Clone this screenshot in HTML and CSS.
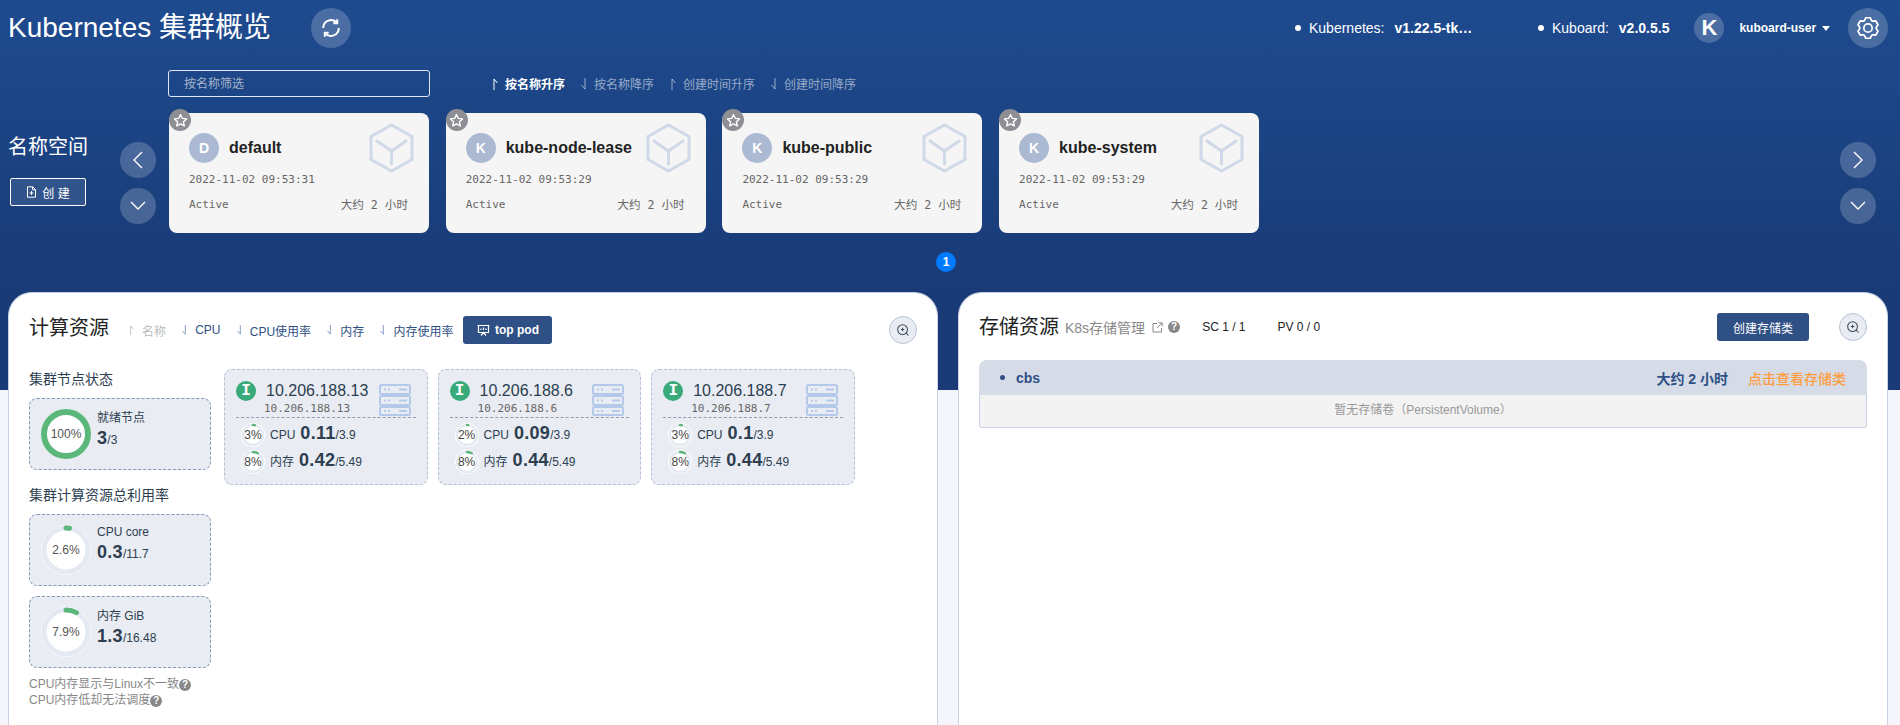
FILE: index.html
```html
<!DOCTYPE html>
<html lang="zh-CN">
<head>
<meta charset="utf-8">
<title>Kubernetes 集群概览</title>
<link rel="stylesheet" href="styles.css">
</head>
<body>
<svg class="defs" width="0" height="0" aria-hidden="true">
  <symbol id="up" viewBox="0 0 6 12"><path d="M2 12V1L5.5 5" fill="none" stroke="currentColor" stroke-width="1"/></symbol>
  <symbol id="down" viewBox="0 0 6 12"><path d="M4 0V11L.5 7" fill="none" stroke="currentColor" stroke-width="1"/></symbol>
  <symbol id="star" viewBox="0 0 24 24"><path d="M12 2.5l2.9 6.2 6.8.8-5 4.6 1.4 6.7-6.1-3.4-6 3.4 1.3-6.7-5-4.6 6.8-.8z" fill="none" stroke="currentColor" stroke-width="2.2" stroke-linejoin="round"/></symbol>
  <symbol id="cube" viewBox="0 0 45 50"><path d="M22.5 2L43 13.500v23L22.500 48 2 36.500v-23z M8 18l14.500 10L37 18 M22.500 28v13" fill="none" stroke="currentColor" stroke-width="3" stroke-linejoin="round" stroke-linecap="round"/></symbol>
  <symbol id="server" viewBox="0 0 32 32"><g fill="none" stroke="currentColor" stroke-width="2"><rect x="1" y="1" width="30" height="9" rx="1.500"/><rect x="1" y="12" width="30" height="9" rx="1.500"/><rect x="1" y="23" width="30" height="8" rx="1.500"/></g><path d="M5 5.500h2M9 5.500h2M20 5.500h8M5 16.500h2M9 16.500h2M20 16.500h8M5 27h2M9 27h2M20 27h8" stroke="currentColor" stroke-width="2"/></symbol>
  <symbol id="magnify" viewBox="0 0 16 16"><g fill="none" stroke="currentColor" stroke-width="1.200"><circle cx="7.500" cy="7.500" r="5.600"/><path d="M11.600 11.600L14 14" stroke-linecap="round"/><path d="M5.500 7.500h4M7.500 5.500v4"/></g></symbol>
</svg>

<div class="page">
  <header class="topbar">
    <h1 class="title">Kubernetes 集群概览</h1>
    <button class="round refresh" type="button" aria-label="刷新">
      <svg width="22" height="22" viewBox="0 0 24 24" fill="none" stroke="#fff" stroke-width="2.200"><path d="M20.500 12a8.500 8.500 0 0 1-15 5.500M3.500 12a8.500 8.500 0 0 1 15-5.500"/><path d="M18.800 2.500v4.300h-4.300M5.200 21.500v-4.300h4.300"/></svg>
    </button>
    <div class="meta meta-k8s"><i class="dot"></i><span>Kubernetes:</span><b class="ellipsis">v1.22.5-tk…</b></div>
    <div class="meta meta-kb"><i class="dot"></i><span>Kuboard:</span><b>v2.0.5.5</b></div>
    <span class="user-avatar">K</span>
    <span class="user-name">kuboard-user</span>
    <i class="caret"></i>
    <button class="round gear" type="button" aria-label="设置">
      <svg width="24" height="24" viewBox="0 0 24 24" fill="none" stroke="#fff" stroke-width="1.700" stroke-linejoin="round"><path d="M8.410 4.630L9.820 1.730H14.180L15.590 4.630L16.580 5.200L19.800 4.970L21.990 8.760L20.180 11.430V12.570L21.990 15.240L19.800 19.030L16.580 18.800L15.590 19.370L14.180 22.270H9.820L8.410 19.370L7.420 18.800L4.200 19.030L2.010 15.240L3.820 12.570V11.430L2.010 8.760L4.200 4.970L7.420 5.200Z"/><circle cx="12" cy="12" r="4.200"/></svg>
    </button>
  </header>

  <section class="hero">
    <div class="side">
      <div class="side-title">名称空间</div>
      <button class="create" type="button">
        <svg width="11" height="12" viewBox="0 0 11 12" fill="none" stroke="#fff" stroke-width="1"><path d="M1.500.8h5.200l2.800 2.800v7.600h-8zM6.500 1v2.800h3M5.500 5v4M3.500 7h4"/></svg>
        <span>创 建</span>
      </button>
    </div>
    <div class="nav">
      <button class="round-s" type="button" aria-label="上一页"><svg width="14" height="20" viewBox="0 0 14 20" fill="none" stroke="#fff" stroke-width="1.400"><path d="M11 2L3 10l8 8"/></svg></button>
      <button class="round-s" type="button" aria-label="展开"><svg width="18" height="12" viewBox="0 0 18 12" fill="none" stroke="#fff" stroke-width="1.400"><path d="M2 2l7 7 7-7"/></svg></button>
    </div>
    <div class="hero-main">
      <div class="filters">
        <input class="filter" type="text" placeholder="按名称筛选">
        <div class="sorts sorts-hero">
          <span class="sort active"><svg class="arr"><use href="#up"/></svg>按名称升序</span>
          <span class="sort"><svg class="arr"><use href="#down"/></svg>按名称降序</span>
          <span class="sort"><svg class="arr"><use href="#up"/></svg>创建时间升序</span>
          <span class="sort"><svg class="arr"><use href="#down"/></svg>创建时间降序</span>
        </div>
      </div>
      <div class="cards">
        <article class="ns">
          <span class="fav"><svg width="15" height="15"><use href="#star"/></svg></span>
          <div class="ns-head"><span class="ns-avatar">D</span><span class="ns-name">default</span><svg class="cube"><use href="#cube"/></svg></div>
          <div class="ns-time">2022-11-02 09:53:31</div>
          <div class="ns-foot"><span>Active</span><span>大约 2 小时</span></div>
        </article>
        <article class="ns">
          <span class="fav"><svg width="15" height="15"><use href="#star"/></svg></span>
          <div class="ns-head"><span class="ns-avatar">K</span><span class="ns-name">kube-node-lease</span><svg class="cube"><use href="#cube"/></svg></div>
          <div class="ns-time">2022-11-02 09:53:29</div>
          <div class="ns-foot"><span>Active</span><span>大约 2 小时</span></div>
        </article>
        <article class="ns">
          <span class="fav"><svg width="15" height="15"><use href="#star"/></svg></span>
          <div class="ns-head"><span class="ns-avatar">K</span><span class="ns-name">kube-public</span><svg class="cube"><use href="#cube"/></svg></div>
          <div class="ns-time">2022-11-02 09:53:29</div>
          <div class="ns-foot"><span>Active</span><span>大约 2 小时</span></div>
        </article>
        <article class="ns">
          <span class="fav"><svg width="15" height="15"><use href="#star"/></svg></span>
          <div class="ns-head"><span class="ns-avatar">K</span><span class="ns-name">kube-system</span><svg class="cube"><use href="#cube"/></svg></div>
          <div class="ns-time">2022-11-02 09:53:29</div>
          <div class="ns-foot"><span>Active</span><span>大约 2 小时</span></div>
        </article>
      </div>
    </div>
    <div class="nav">
      <button class="round-s" type="button" aria-label="下一页"><svg width="14" height="20" viewBox="0 0 14 20" fill="none" stroke="#fff" stroke-width="1.400"><path d="M3 2l8 8-8 8"/></svg></button>
      <button class="round-s" type="button" aria-label="展开"><svg width="18" height="12" viewBox="0 0 18 12" fill="none" stroke="#fff" stroke-width="1.400"><path d="M2 2l7 7 7-7"/></svg></button>
    </div>
  </section>

  <div class="pager"><span class="page-dot">1</span></div>

  <main class="panels">
    <section class="panel panel-compute">
      <div class="panel-head">
        <h2 class="panel-title">计算资源</h2>
        <div class="sorts sorts-panel">
          <span class="sort off"><svg class="arr"><use href="#up"/></svg>名称</span>
          <span class="sort"><svg class="arr"><use href="#down"/></svg>CPU</span>
          <span class="sort"><svg class="arr"><use href="#down"/></svg>CPU使用率</span>
          <span class="sort"><svg class="arr"><use href="#down"/></svg>内存</span>
          <span class="sort"><svg class="arr"><use href="#down"/></svg>内存使用率</span>
        </div>
        <button class="btn btn-top" type="button">
          <svg width="13" height="13" viewBox="0 0 13 13" fill="none" stroke="#fff" stroke-width="1.200"><path d="M.5 1.500h12M1.500 1.500v7h10v-7M4 11.500l2.500-3 2.500 3M4 6V4.500M6.500 6V3.500M9 6V4.500"/></svg>
          top pod
        </button>
        <button class="zoom-btn" type="button" aria-label="放大"><svg width="14" height="14"><use href="#magnify"/></svg></button>
      </div>
      <div class="compute">
        <aside class="summary">
          <h3 class="sum-title">集群节点状态</h3>
          <div class="sum-box">
            <div class="ring-big">
              <svg width="50" height="50" viewBox="0 0 50 50"><circle cx="25" cy="25" r="25" fill="#fff"/><circle cx="25" cy="25" r="22" fill="#fff" stroke="#5cb87a" stroke-width="6"/></svg>
              <span>100%</span>
            </div>
            <div class="sum-text"><div class="sum-label">就绪节点</div><div class="sum-val"><b>3</b>/3</div></div>
          </div>
          <h3 class="sum-title sum-title-2">集群计算资源总利用率</h3>
          <div class="sum-box">
            <div class="ring-big">
              <svg width="50" height="50" viewBox="0 0 50 50"><circle cx="25" cy="25" r="25" fill="#fff"/><circle cx="25" cy="25" r="22" fill="none" stroke="#e5e9f2" stroke-width="5"/><circle cx="25" cy="25" r="22" fill="none" stroke="#5cb87a" stroke-width="5" stroke-linecap="round" pathLength="100" stroke-dasharray="2.600 100" transform="rotate(-90 25 25)"/></svg>
              <span>2.6%</span>
            </div>
            <div class="sum-text sum-text-cpu"><div class="sum-label">CPU core</div><div class="sum-val"><b>0.3</b>/11.7</div></div>
          </div>
          <div class="sum-box sum-box-last">
            <div class="ring-big">
              <svg width="50" height="50" viewBox="0 0 50 50"><circle cx="25" cy="25" r="25" fill="#fff"/><circle cx="25" cy="25" r="22" fill="none" stroke="#e5e9f2" stroke-width="5"/><circle cx="25" cy="25" r="22" fill="none" stroke="#5cb87a" stroke-width="5" stroke-linecap="round" pathLength="100" stroke-dasharray="7.900 100" transform="rotate(-90 25 25)"/></svg>
              <span>7.9%</span>
            </div>
            <div class="sum-text"><div class="sum-label">内存 GiB</div><div class="sum-val"><b>1.3</b>/16.48</div></div>
          </div>
          <p class="note">CPU内存显示与Linux不一致<i class="help">?</i></p>
          <p class="note">CPU内存低却无法调度<i class="help">?</i></p>
        </aside>
        <div class="nodes">
          <article class="node">
            <div class="node-head">
              <span class="node-badge">I</span>
              <div class="node-names"><div class="node-name">10.206.188.13</div><div class="node-ip">10.206.188.13</div></div>
              <svg class="server"><use href="#server"/></svg>
            </div>
            <div class="stat">
              <div class="ring-s"><svg width="24" height="24" viewBox="0 0 24 24"><circle cx="12" cy="12" r="12" fill="#fff"/><circle cx="12" cy="12" r="10" fill="#fff" stroke="#e5e9f2" stroke-width="2.400"/><circle cx="12" cy="12" r="10" fill="none" stroke="#5cb87a" stroke-width="2.400" pathLength="100" stroke-dasharray="3 100" stroke-linecap="round" transform="rotate(-90 12 12)"/></svg><span>3%</span></div>
              <span class="stat-label">CPU</span><b class="stat-val">0.11</b><span class="stat-max">/3.9</span>
            </div>
            <div class="stat">
              <div class="ring-s"><svg width="24" height="24" viewBox="0 0 24 24"><circle cx="12" cy="12" r="12" fill="#fff"/><circle cx="12" cy="12" r="10" fill="#fff" stroke="#e5e9f2" stroke-width="2.400"/><circle cx="12" cy="12" r="10" fill="none" stroke="#5cb87a" stroke-width="2.400" pathLength="100" stroke-dasharray="8 100" stroke-linecap="round" transform="rotate(-90 12 12)"/></svg><span>8%</span></div>
              <span class="stat-label">内存</span><b class="stat-val">0.42</b><span class="stat-max">/5.49</span>
            </div>
          </article>
          <article class="node">
            <div class="node-head">
              <span class="node-badge">I</span>
              <div class="node-names"><div class="node-name">10.206.188.6</div><div class="node-ip">10.206.188.6</div></div>
              <svg class="server"><use href="#server"/></svg>
            </div>
            <div class="stat">
              <div class="ring-s"><svg width="24" height="24" viewBox="0 0 24 24"><circle cx="12" cy="12" r="12" fill="#fff"/><circle cx="12" cy="12" r="10" fill="#fff" stroke="#e5e9f2" stroke-width="2.400"/><circle cx="12" cy="12" r="10" fill="none" stroke="#5cb87a" stroke-width="2.400" pathLength="100" stroke-dasharray="2 100" stroke-linecap="round" transform="rotate(-90 12 12)"/></svg><span>2%</span></div>
              <span class="stat-label">CPU</span><b class="stat-val">0.09</b><span class="stat-max">/3.9</span>
            </div>
            <div class="stat">
              <div class="ring-s"><svg width="24" height="24" viewBox="0 0 24 24"><circle cx="12" cy="12" r="12" fill="#fff"/><circle cx="12" cy="12" r="10" fill="#fff" stroke="#e5e9f2" stroke-width="2.400"/><circle cx="12" cy="12" r="10" fill="none" stroke="#5cb87a" stroke-width="2.400" pathLength="100" stroke-dasharray="8 100" stroke-linecap="round" transform="rotate(-90 12 12)"/></svg><span>8%</span></div>
              <span class="stat-label">内存</span><b class="stat-val">0.44</b><span class="stat-max">/5.49</span>
            </div>
          </article>
          <article class="node">
            <div class="node-head">
              <span class="node-badge">I</span>
              <div class="node-names"><div class="node-name">10.206.188.7</div><div class="node-ip">10.206.188.7</div></div>
              <svg class="server"><use href="#server"/></svg>
            </div>
            <div class="stat">
              <div class="ring-s"><svg width="24" height="24" viewBox="0 0 24 24"><circle cx="12" cy="12" r="12" fill="#fff"/><circle cx="12" cy="12" r="10" fill="#fff" stroke="#e5e9f2" stroke-width="2.400"/><circle cx="12" cy="12" r="10" fill="none" stroke="#5cb87a" stroke-width="2.400" pathLength="100" stroke-dasharray="3 100" stroke-linecap="round" transform="rotate(-90 12 12)"/></svg><span>3%</span></div>
              <span class="stat-label">CPU</span><b class="stat-val">0.1</b><span class="stat-max">/3.9</span>
            </div>
            <div class="stat">
              <div class="ring-s"><svg width="24" height="24" viewBox="0 0 24 24"><circle cx="12" cy="12" r="12" fill="#fff"/><circle cx="12" cy="12" r="10" fill="#fff" stroke="#e5e9f2" stroke-width="2.400"/><circle cx="12" cy="12" r="10" fill="none" stroke="#5cb87a" stroke-width="2.400" pathLength="100" stroke-dasharray="8 100" stroke-linecap="round" transform="rotate(-90 12 12)"/></svg><span>8%</span></div>
              <span class="stat-label">内存</span><b class="stat-val">0.44</b><span class="stat-max">/5.49</span>
            </div>
          </article>
        </div>
      </div>
    </section>

    <section class="panel panel-storage">
      <div class="panel-head">
        <h2 class="panel-title">存储资源</h2>
        <span class="k8s-link">K8s存储管理</span>
        <svg class="ext" width="11" height="11" viewBox="0 0 11 11" fill="none" stroke="#888" stroke-width="1"><path d="M5 1.500H1v8.500h8.500V6M6.500.8h3.700v3.700M10 1L5 6"/></svg>
        <i class="help help-k8s">?</i>
        <span class="count count-sc">SC 1 / 1</span>
        <span class="count count-pv">PV 0 / 0</span>
        <button class="btn btn-create" type="button">创建存储类</button>
        <button class="zoom-btn" type="button" aria-label="放大"><svg width="14" height="14"><use href="#magnify"/></svg></button>
      </div>
      <div class="sc">
        <div class="sc-head">
          <i class="sc-dot"></i><span class="sc-name">cbs</span>
          <span class="sc-age">大约 2 小时</span>
          <span class="sc-link">点击查看存储类</span>
        </div>
        <div class="sc-body">暂无存储卷（PersistentVolume）</div>
      </div>
    </section>
  </main>
</div>
</body>
</html>
```

FILE: styles.css
```css
* { box-sizing: border-box; }
html, body { margin: 0; height: 100%; }
body {
  font-family: "Liberation Sans", "Noto Sans CJK SC", sans-serif;
  font-size: 12px;
  color: #2c3e50;
  overflow: hidden;
}
button { font: inherit; border: 0; padding: 0; cursor: pointer; }
h1, h2, h3, p { margin: 0; font-weight: 400; }
i { font-style: normal; }
.defs { display: block; height: 0; }

.page {
  height: 725px;
  overflow: hidden;
  background: linear-gradient(#1e4b8f, #193a75 300px, #193a75) top / 100% 390px no-repeat, #f4f6fb;
}

/* top bar */
.topbar { display: flex; align-items: center; height: 56px; padding: 0 12px 0 8px; color: #fff; }
.title { font-size: 28px; line-height: 40px; width: 262px; white-space: nowrap; }
.round {
  width: 40px; height: 40px; border-radius: 50%;
  background: rgba(255, 255, 255, .2);
  display: flex; align-items: center; justify-content: center;
}
.refresh { margin-left: 41px; }
.meta { display: flex; align-items: center; font-size: 14px; }
.meta b { margin-left: 10px; }
.meta-k8s { margin-left: 944px; width: 243px; }
.dot { width: 6px; height: 6px; border-radius: 50%; background: #fff; margin-right: 8px; }
.user-avatar {
  width: 30px; height: 30px; border-radius: 50%; margin-left: 25px;
  background: rgba(255, 255, 255, .2);
  display: flex; align-items: center; justify-content: center;
  font-size: 22px; font-weight: 700; color: #fff;
}
.user-name { margin-left: 15px; font-size: 12px; font-weight: 700; }
.caret { margin-left: 6px; border: 4px solid transparent; border-top: 5px solid #fff; border-bottom: 0; }
.gear { margin-left: auto; }

/* hero */
.hero { display: flex; padding: 14px 24px 0 8px; height: 177px; }
.side { width: 112px; padding-top: 63px; color: #fff; }
.side-title { font-size: 20px; line-height: 28px; }
.create {
  margin: 17px 0 0 2px; width: 76px; height: 28px; border: 1px solid #fff; border-radius: 2px;
  background: rgba(255, 255, 255, .1); color: #fff; font-size: 12px;
  display: flex; align-items: center; justify-content: center; gap: 5px;
}
.nav { width: 36px; padding-top: 72px; display: flex; flex-direction: column; gap: 10px; }
.round-s {
  width: 36px; height: 36px; border-radius: 50%;
  background: rgba(255, 255, 255, .2);
  display: flex; align-items: center; justify-content: center;
}
.hero-main { flex: 1; padding-left: 13px; }
.filters { display: flex; align-items: center; height: 27px; margin-left: -1px; }
.filter {
  width: 262px; height: 27px; padding: 0 15px; border: 1px solid #dfe6f1; border-radius: 3px;
  background: transparent; color: #fff; font: inherit; outline: 0;
}
.filter::placeholder { color: #a7b4c9; }
.sorts { display: flex; align-items: center; }
.sort { display: flex; align-items: center; white-space: nowrap; margin-right: 16px; }
.arr { width: 6px; height: 12px; margin-right: 7px; }
.sorts-hero { margin-left: 62px; color: rgba(255, 255, 255, .55); }
.sorts-hero .active { color: #fff; font-weight: 700; }

.cards { display: flex; gap: 16.7px; margin-top: 16px; }
.ns {
  position: relative; width: 260px; height: 120px; padding: 20px 21px 0 20px;
  background: #f5f5f5; border-radius: 8px; color: #666;
}
.fav {
  position: absolute; left: 0; top: -4px; width: 22px; height: 22px; border-radius: 50%;
  background: #8e8f94; color: #fff;
  display: flex; align-items: center; justify-content: center;
}
.ns-head { display: flex; align-items: center; height: 30px; }
.ns-avatar {
  width: 30px; height: 30px; border-radius: 50%; background: #abbad2; color: #fff;
  font-size: 14px; font-weight: 700;
  display: flex; align-items: center; justify-content: center;
}
.ns-name { margin-left: 10px; font-size: 16px; font-weight: 700; color: #222; }
.cube { width: 45px; height: 50px; margin: 0 -6px 0 auto; color: #cfd9e7; flex: none; }
.ns-time { margin-top: 10px; font: 11px/14px "DejaVu Sans Mono", "Noto Sans CJK SC", monospace; color: #666; }
.ns-foot {
  display: flex; justify-content: space-between; align-items: center; margin-top: 8px; height: 20px;
  font: 11px/20px "DejaVu Sans Mono", "Noto Sans CJK SC", monospace; color: #666;
}
.ns-foot span + span { font-size: 11.6px; }

.pager { display: flex; justify-content: center; padding-right: 8px; height: 39px; padding-top: 19px; }
.page-dot {
  width: 20px; height: 20px; border-radius: 50%; background: #007bff; color: #fff;
  font-size: 12px; font-weight: 700; display: flex; align-items: center; justify-content: center;
}

/* panels */
.panels { display: flex; gap: 20px; padding: 0 12px 0 8px; margin-top: 20px; }
.panel {
  flex: 1; height: 460px; background: #fff; border: 1px solid #c8d3e6; border-bottom: 0;
  border-radius: 24px 24px 0 0; padding: 23px 20px 0;
}
.panel-storage { padding-top: 20px; }
.panel-head { display: flex; align-items: center; height: 28px; }
.panel-title { font-size: 20px; line-height: 28px; color: #222; }
.panel-compute .panel-title { margin-top: -4px; }
.sorts-panel { margin-left: 20px; color: #2f5085; }
.sorts-panel .sort { margin-right: 16.2px; }
.sorts-panel .arr { width: 5px; margin-right: 8px; color: #6f8eb8; }
.sorts-panel .off { color: #bbb; }
.sorts-panel .off .arr { color: #bbb; }
.sorts-panel .sort:last-child { margin-right: 10px; }
.btn {
  height: 28px; border-radius: 3px; background: #2f5085; color: #fff; font-size: 12px;
  display: flex; align-items: center; justify-content: center;
}
.btn-top { width: 89px; gap: 5px; font-weight: 700; }
.btn-create { width: 92px; margin-left: auto; }
.zoom-btn {
  width: 28px; height: 28px; border-radius: 50%; background: #e9ecf2; border: 1px solid #b8c4d9; color: #3d4a5f;
  display: flex; align-items: center; justify-content: center;
}
.panel-compute .zoom-btn { margin-left: auto; }
.panel-storage .zoom-btn { margin-left: 30px; }

.compute { display: flex; gap: 13px; margin-top: 25px; }
.summary { width: 182px; flex: none; }
.sum-title { font-size: 14px; line-height: 20px; color: #2c3e50; margin-bottom: 9px; }
.sum-title-2 { margin-top: 15px; }
.sum-box {
  display: flex; align-items: center; gap: 6px; height: 72px; padding: 0 11px;
  background: #e9ecf2; border: 1px dashed #8797b4; border-radius: 8px;
}
.sum-box-last { margin-top: 10px; }
.ring-big, .ring-s { display: grid; place-items: center; flex: none; }
.ring-big > *, .ring-s > * { grid-area: 1 / 1; }
.ring-big { width: 50px; height: 50px; color: #555; font-size: 12px; }
.sum-text { align-self: flex-start; padding-top: 11px; }
.sum-text-cpu { padding-top: 9px; }
.sum-label { font-size: 12px; line-height: 16px; color: #2c3e50; }
.sum-val { font-size: 12px; line-height: 22px; margin-top: 1px; color: #2c3e50; }
.sum-val b { font-size: 18px; letter-spacing: .3px; }
.note { font-size: 12px; line-height: 16px; color: #888; }
.sum-box-last + .note { margin-top: 8px; }
.help {
  display: inline-flex; align-items: center; justify-content: center; vertical-align: 0;
  width: 12px; height: 12px; border-radius: 50%; background: #888; color: #fff;
  font-size: 10px; font-weight: 700; line-height: 12px;
}

.nodes { display: flex; align-items: flex-start; gap: 10px; }
.node {
  width: 203.6px; height: 116px; padding: 11px 11px 0; background: #e9ecf2;
  border: 1px dashed #b3bfd4; border-radius: 8px;
}
.node-head { display: flex; height: 37px; border-bottom: 1px dashed #8f9cb3; }
.node-badge {
  width: 20px; height: 20px; border-radius: 50%; background: #39aa7a; color: #fff; flex: none;
  font: 700 16px/20px "Liberation Mono", monospace; text-align: center;
}
.node-names { margin-left: 10px; }
.node-name { font-size: 16px; line-height: 20px; color: #2c3e50; white-space: nowrap; }
.node-ip { font: 11px/16px "DejaVu Sans Mono", monospace; margin-left: -2px; color: #666; }
.server { width: 32px; height: 32px; margin: 3px 5px 0 auto; color: #b4c9ea; flex: none; }
.stat { display: flex; align-items: baseline; height: 24px; margin: 5px 0 0 5px; color: #2c3e50; }
.stat + .stat { margin-top: 3px; }
.ring-s { width: 24px; height: 24px; align-self: center; font-size: 12px; color: #444; margin-right: 5px; }
.stat-label { font-size: 12px; margin-right: 5px; }
.stat-val { font-size: 18px; letter-spacing: .3px; }
.stat-max { font-size: 12px; }

/* storage */
.k8s-link { margin-left: 6px; font-size: 14px; color: #888; }
.ext { margin-left: 7px; }
.help-k8s { margin-left: 5px; }
.count { font-size: 12px; color: #222; }
.count-sc { margin-left: 22px; }
.count-pv { margin-left: 32px; }
.sc { margin-top: 19px; }
.sc-head {
  display: flex; align-items: center; height: 35px; padding: 0 21px;
  background: #d5dbe7; border-radius: 8px 8px 0 0; color: #2f5085;
}
.sc-dot { width: 5px; height: 5px; border-radius: 50%; background: #2f5085; margin-right: 11px; }
.sc-name { font-size: 14px; font-weight: 700; }
.sc-age { margin-left: auto; font-size: 14px; font-weight: 700; }
.sc-link { margin-left: 20px; font-size: 14px; font-weight: 500; color: #ff9d3e; }
.sc-body {
  height: 33px; line-height: 31px; text-align: center; background: #f3f3f3; color: #999; font-size: 12px;
  border: 1px solid #c8d3e6; border-top: 0; border-radius: 0 0 3px 3px;
}
```
